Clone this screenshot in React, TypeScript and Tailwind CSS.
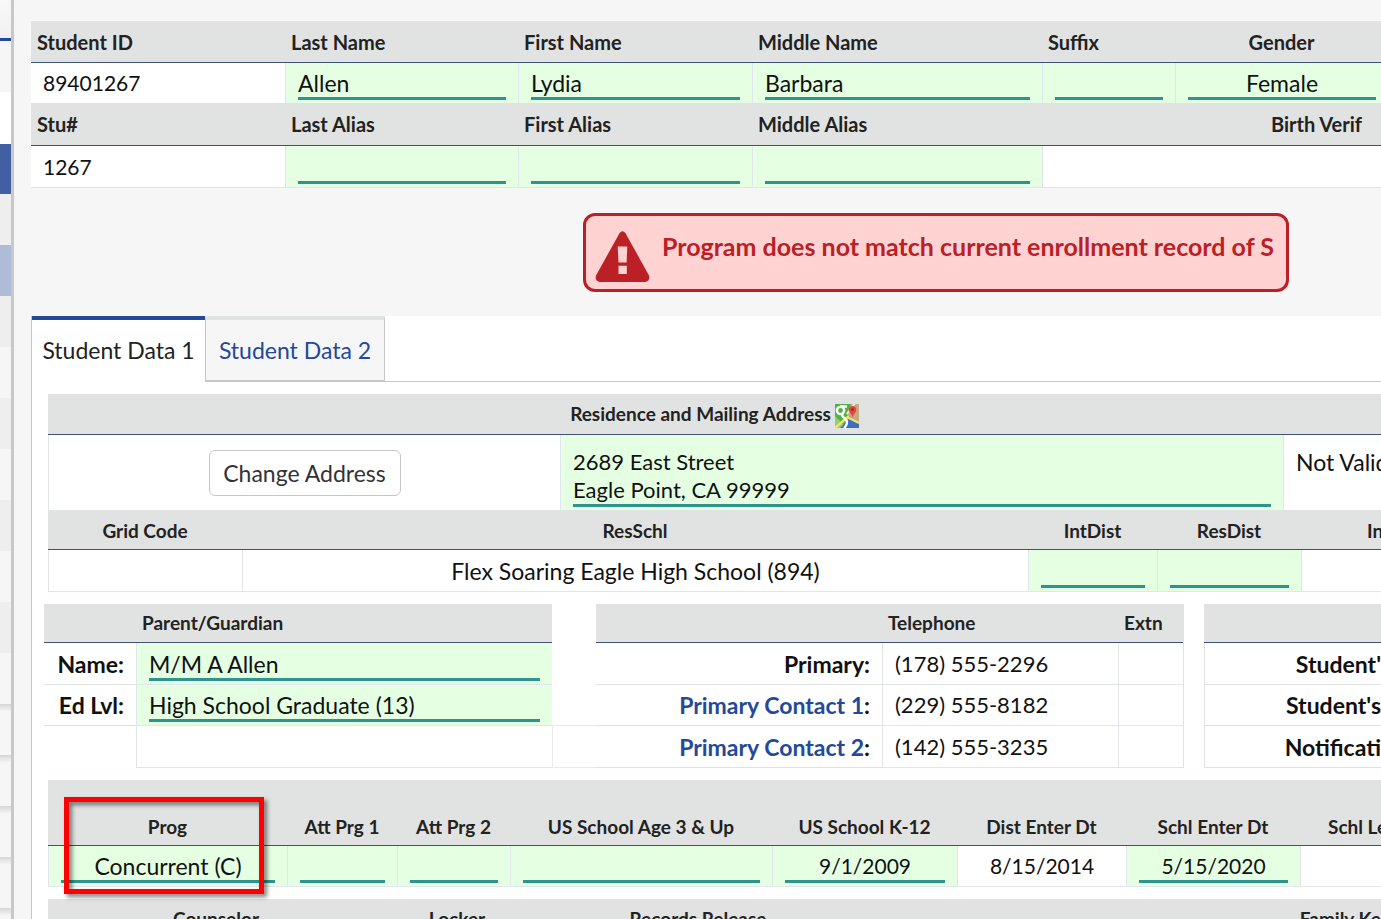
import type { ReactNode } from "react";
import clsx from "clsx";

const menuRows = [
  "h-[51px] bg-[#f6f6f6]",
  "h-[52px] bg-white",
  "h-[50px] bg-[#4160a1]",
  "h-[51px] bg-[#eeeeee]",
  "h-[51px] bg-[#afbcd9]",
  "h-[51px] bg-[#eeeeee]",
  "h-[51px] bg-[#f6f6f6]",
  "h-[51px] bg-[#eeeeee]",
  "h-[51px] bg-[#f6f6f6]",
  "h-[51px] bg-[#eeeeee]",
  "h-[51px] bg-[#f6f6f6]",
  "h-[51px] bg-[#eeeeee]",
  "h-[51px] bg-[#f6f6f6]",
  "h-[51px] bg-linear-to-b from-[#d6d6d6] to-[#f6f6f6] to-15%",
  "h-[51px] bg-linear-to-b from-[#d6d6d6] to-[#f6f6f6] to-15%",
  "h-[51px] bg-linear-to-b from-[#d6d6d6] to-[#f6f6f6] to-15%",
  "h-[51px] bg-linear-to-b from-[#d6d6d6] to-[#f6f6f6] to-15%",
  "h-[51px] bg-linear-to-b from-[#d6d6d6] to-[#f6f6f6] to-15%",
];

function Sidebar() {
  return (
    <nav className="w-[14px] shrink-0 border-r-3 border-[#c8c8c8]">
      <div className="h-[41px] border-b-3 border-[#24499a] bg-linear-to-b from-[#f8f8f8] to-[#f0f0f0]" />
      {menuRows.map((row, i) => (
        <div key={i} className={row} />
      ))}
    </nav>
  );
}

type HeadProps = { children?: ReactNode; className?: string; span?: number };

function Head({ children, className, span }: HeadProps) {
  return (
    <th
      colSpan={span}
      className={clsx(
        "overflow-hidden border-b border-[#3f5276] bg-[#e1e3e2] px-[6px] font-bold whitespace-nowrap text-[#222]",
        className,
      )}
    >
      {children}
    </th>
  );
}

type CellProps = { children?: ReactNode; className?: string; span?: number; last?: boolean };

function Cell({ children, className, span, last = true }: CellProps) {
  return (
    <td
      colSpan={span}
      className={clsx(
        "overflow-hidden border-l border-[#e1e5e8] px-3 whitespace-nowrap",
        last && "border-b",
        className,
      )}
    >
      {children}
    </td>
  );
}

type FieldProps = {
  label: string;
  value?: string;
  center?: boolean;
  numeric?: boolean;
  span?: number;
  last?: boolean;
};

function Field({ label, value = "", center, numeric, span, last = true }: FieldProps) {
  return (
    <td
      colSpan={span}
      className={clsx("border-l border-[#e1e5ee] bg-[#e4ffe2] px-3 pb-[3px] align-bottom", last && "border-b")}
    >
      <input
        aria-label={label}
        defaultValue={value}
        className={clsx(
          "block h-[33px] w-full border-b-3 border-[#2f948e] bg-transparent pt-px outline-none",
          center && "text-center",
          numeric && "text-[21px]",
        )}
      />
    </td>
  );
}

function StudentHeader() {
  return (
    <table className="w-full min-w-[1357px] table-fixed border-separate border-spacing-0 bg-white">
      <colgroup>
        <col className="w-[254px]" />
        <col className="w-[233px]" />
        <col className="w-[234px]" />
        <col className="w-[290px]" />
        <col className="w-[133px]" />
        <col />
      </colgroup>
      <tbody>
        <tr className="h-[42px] text-left text-[20px]">
          <Head>Student ID</Head>
          <Head>Last Name</Head>
          <Head>First Name</Head>
          <Head>Middle Name</Head>
          <Head>Suffix</Head>
          <Head className="text-center">Gender</Head>
        </tr>
        <tr className="h-10">
          <td className="px-3 text-[21px]">89401267</td>
          <Field label="Last Name" value="Allen" last={false} />
          <Field label="First Name" value="Lydia" last={false} />
          <Field label="Middle Name" value="Barbara" last={false} />
          <Field label="Suffix" last={false} />
          <Field label="Gender" value="Female" center last={false} />
        </tr>
        <tr className="h-[43px] text-left text-[20px]">
          <Head>Stu#</Head>
          <Head>Last Alias</Head>
          <Head>First Alias</Head>
          <Head>Middle Alias</Head>
          <Head span={2} className="pr-[26px] text-right">Birth Verif</Head>
        </tr>
        <tr className="h-[42px]">
          <td className="border-b border-[#e1e3e2] px-3 text-[21px]">1267</td>
          <Field label="Last Alias" />
          <Field label="First Alias" />
          <Field label="Middle Alias" />
          <Cell span={2} />
        </tr>
      </tbody>
    </table>
  );
}

function Alert() {
  return (
    <div
      role="alert"
      className="mt-[25px] ml-[552px] flex h-[79px] w-[706px] items-start gap-3 rounded-xl border-3 border-[#bb2027] bg-[#ffd3d2] pl-[9px] text-[25px] font-bold whitespace-nowrap text-[#bb2027]"
    >
      <svg viewBox="0 0 55 51" className="mt-[15px] h-[51px] w-[55px] shrink-0" aria-hidden="true">
        <path
          fill="#bb2027"
          d="M24.5 2.2Q27.5-1.6 30.5 2.2L54 44.5Q55.5 50 50 51H5Q-.5 50 1 44.5Z"
        />
        <path fill="#ffd3d2" d="M22.7 15.5H32.3L31.6 31.5H23.5ZM23.5 34.7H31.8V43H23.5Z" />
      </svg>
      <span className="mt-[14px] leading-[32px]">Program does not match current enrollment record of S</span>
    </div>
  );
}

function Tabs() {
  return (
    <div role="tablist" className="flex h-[66px] items-stretch">
      <button role="tab" aria-selected="true" className="w-[173px] border-t-4 border-b-2 border-t-[#24499a] border-b-white text-[#222]">
        Student Data 1
      </button>
      <button
        role="tab"
        aria-selected="false"
        className="w-[180px] border-x border-t-4 border-b-2 border-x-[#c6c6c6] border-t-[#e1e3e2] border-b-[#c6c6c6] bg-[#f6f6f6] text-[#24499a]"
      >
        Student Data 2
      </button>
      <div className="flex-1 border-b border-[#c6c6c6]" />
    </div>
  );
}

function MapIcon() {
  return (
    <svg viewBox="0 0 24 24" className="mt-1 inline-block size-6" aria-hidden="true">
      <path fill="#55b043" d="M0 0h24v24H0z" />
      <path fill="#8fd06a" d="M0 12 12 24H0z" />
      <path fill="#c5a985" d="M16 0h8v18L11 10z" />
      <path fill="#3c6fc4" d="M5 24 14 15l10 4v5z" />
      <path fill="none" stroke="#f3dd78" strokeWidth="2.5" d="M0 24 14 12M12 13l12 6" />
      <path fill="none" stroke="#f4f1e4" strokeWidth="1.8" d="M12 10 20-1" />
      <circle cx="5.5" cy="6.5" r="3.6" fill="none" stroke="#fff" strokeWidth="2.4" />
      <path fill="none" stroke="#fff" strokeWidth="2.4" d="M5 2.5h7M8 10c-3 3 4 4 4 8s-1 4-3 6" />
      <path fill="#e0473f" d="M17.5 2a3.8 3.8 0 0 1 3.8 3.8c0 3-3.2 4-3.6 8-.5-4-4-5-4-8A3.8 3.8 0 0 1 17.5 2z" />
      <circle cx="17.5" cy="5.5" r="1.3" fill="#8e2320" />
    </svg>
  );
}

function AddressTable() {
  return (
    <div className="pl-4">
      <table className="w-full table-fixed border-separate border-spacing-0">
        <colgroup>
          <col className="w-[194px]" />
          <col className="w-[318px]" />
          <col className="w-[468px]" />
          <col className="w-[129px]" />
          <col className="w-[126px]" />
          <col className="w-[18px]" />
          <col />
        </colgroup>
        <tbody>
          <tr className="h-[41px] text-[19px]">
            <Head span={7}>
              <span className="inline-flex items-center gap-1 leading-[28px]">
                Residence and Mailing Address <MapIcon />
              </span>
            </Head>
          </tr>
          <tr className="h-[75px]">
            <Cell span={2} last={false} className="text-center">
              <button className="h-[46px] w-[192px] rounded-md border border-[#c6c6c6] bg-white text-[#333]">
                Change Address
              </button>
            </Cell>
            <td colSpan={3} className="border-l border-[#e1e5ee] bg-[#e4ffe2] px-3 pb-[3px] align-bottom">
              <textarea
                aria-label="Residence and Mailing Address"
                rows={2}
                defaultValue={"2689 East Street\nEagle Point, CA 99999"}
                className="block h-[59px] w-full resize-none overflow-hidden border-b-3 border-[#2f948e] bg-transparent text-[22px] leading-[28px] outline-none"
              />
            </td>
            <Cell span={2} last={false} className="pt-[13px] align-top leading-[28px]">
              Not Validated
            </Cell>
          </tr>
          <tr className="h-10 text-[19px]">
            <Head className="pt-[2px]">Grid Code</Head>
            <Head className="pt-[2px]" span={2}>ResSchl</Head>
            <Head className="pt-[2px]">IntDist</Head>
            <Head className="pt-[2px]" span={2}>ResDist</Head>
            <Head className="pt-[2px] pl-[66px] text-left">IntraDist</Head>
          </tr>
          <tr className="h-[42px]">
            <Cell />
            <Cell span={2} className="text-center">
              Flex Soaring Eagle High School (894)
            </Cell>
            <Field label="IntDist" />
            <Field label="ResDist" span={2} />
            <Cell />
          </tr>
        </tbody>
      </table>
    </div>
  );
}

const phones = [
  { label: "Primary", number: "(178) 555-2296", link: false },
  { label: "Primary Contact 1", number: "(229) 555-8182", link: true },
  { label: "Primary Contact 2", number: "(142) 555-3235", link: true },
];

const notices = ["Student'", "Student's", "Notificati"];

function ContactTables() {
  return (
    <div className="mt-3 flex pl-3">
      <table className="w-[508px] shrink-0 table-fixed border-separate border-spacing-0">
        <colgroup>
          <col className="w-[92px]" />
          <col />
        </colgroup>
        <tbody>
          <tr className="h-[39px] text-left text-[19px]">
            <Head />
            <Head>Parent/Guardian</Head>
          </tr>
          <tr className="h-[42px]">
            <th className="border-b border-[#e1e3e2] pr-3 text-right">Name:</th>
            <Field label="Name" value="M/M A Allen" />
          </tr>
          <tr className="h-[41px]">
            <th className="border-b border-[#e1e3e2] pr-3 text-right whitespace-nowrap">Ed Lvl:</th>
            <Field label="Ed Lvl" value="High School Graduate (13)" />
          </tr>
          <tr className="h-[42px]">
            <td />
            <Cell />
          </tr>
        </tbody>
      </table>
      <div className="h-[43px] w-11 shrink-0 self-end border-y border-l border-[#e9ecee]" />
      <table className="w-[588px] shrink-0 table-fixed border-separate border-spacing-0 border-r border-[#e1e3e2]">
        <colgroup>
          <col className="w-[286px]" />
          <col className="w-[236px]" />
          <col />
        </colgroup>
        <tbody>
          <tr className="h-[39px] text-left text-[19px]">
            <Head />
            <Head>Telephone</Head>
            <Head>Extn</Head>
          </tr>
          {phones.map((phone) => (
            <tr key={phone.label} className="h-[42px] nth-3:h-[41px]">
              <th className="border-b border-[#e1e3e2] pr-3 text-right">
                {phone.link ? (
                  <a href="#" className="text-[#24499a]">
                    {phone.label}
                  </a>
                ) : (
                  phone.label
                )}
                :
              </th>
              <Cell className="text-[22px]">{phone.number}</Cell>
              <Cell />
            </tr>
          ))}
        </tbody>
      </table>
      <table className="ml-5 min-w-0 flex-1 table-fixed border-separate border-spacing-0">
        <tbody>
          <tr className="h-[39px]">
            <Head />
          </tr>
          {notices.map((notice) => (
            <tr key={notice} className="h-[42px] nth-3:h-[41px]">
              <th className="border-b border-l border-[#e1e3e2] text-right">{notice}</th>
            </tr>
          ))}
        </tbody>
      </table>
    </div>
  );
}

function ProgramTable() {
  return (
    <div className="relative mt-3 pl-4">
      <table className="w-full table-fixed border-separate border-spacing-0">
        <colgroup>
          <col className="w-[239px]" />
          <col className="w-[110px]" />
          <col className="w-[113px]" />
          <col className="w-[262px]" />
          <col className="w-[185px]" />
          <col className="w-[169px]" />
          <col className="w-[174px]" />
          <col />
        </colgroup>
        <tbody>
          <tr className="h-[66px] text-[19px]">
            <Head className="pt-7">Prog</Head>
            <Head className="pt-7">Att Prg 1</Head>
            <Head className="pt-7">Att Prg 2</Head>
            <Head className="pt-7">US School Age 3 &amp; Up</Head>
            <Head className="pt-7">US School K-12</Head>
            <Head className="pt-7">Dist Enter Dt</Head>
            <Head className="pt-7">Schl Enter Dt</Head>
            <Head className="pt-7 pl-7 text-left">Schl Leave Dt</Head>
          </tr>
          <tr className="h-[41px]">
            <Field label="Prog" value="Concurrent (C)" center />
            <Field label="Att Prg 1" />
            <Field label="Att Prg 2" />
            <Field label="US School Age 3 & Up" />
            <Field label="US School K-12" value="9/1/2009" center numeric />
            <Cell className="text-center text-[21px]">8/15/2014</Cell>
            <Field label="Schl Enter Dt" value="5/15/2020" center numeric />
            <Cell />
          </tr>
        </tbody>
      </table>
      <div className="pointer-events-none absolute top-[17px] left-8 h-[97px] w-[200px] border-5 border-[#ff0000] drop-shadow-[3px_3px_2px_rgba(0,0,0,0.5)]" />
    </div>
  );
}

function CounselorTable() {
  return (
    <div className="mt-3 pl-4">
      <table className="w-full table-fixed border-separate border-spacing-0">
        <colgroup>
          <col className="w-[336px]" />
          <col className="w-[146px]" />
          <col className="w-[336px]" />
          <col />
        </colgroup>
        <tbody>
          <tr className="h-10 text-[19px]">
            <Head>Counselor</Head>
            <Head>Locker</Head>
            <Head>Records Release</Head>
            <Head className="pr-0 text-right">Family Ke</Head>
          </tr>
        </tbody>
      </table>
    </div>
  );
}

export default function App() {
  return (
    <div className="flex h-screen overflow-hidden bg-[#f6f6f6] font-[Lato,sans-serif] text-[23px] leading-[32px] text-[#111]">
      <Sidebar />
      <main className="min-w-0 flex-1 pt-[21px] pl-[17px]">
        <StudentHeader />
        <Alert />
        <section className="mt-6 border-l border-[#c6c6c6] bg-white pb-4">
          <Tabs />
          <div className="pt-3">
            <AddressTable />
            <ContactTables />
            <ProgramTable />
            <CounselorTable />
          </div>
        </section>
      </main>
    </div>
  );
}
